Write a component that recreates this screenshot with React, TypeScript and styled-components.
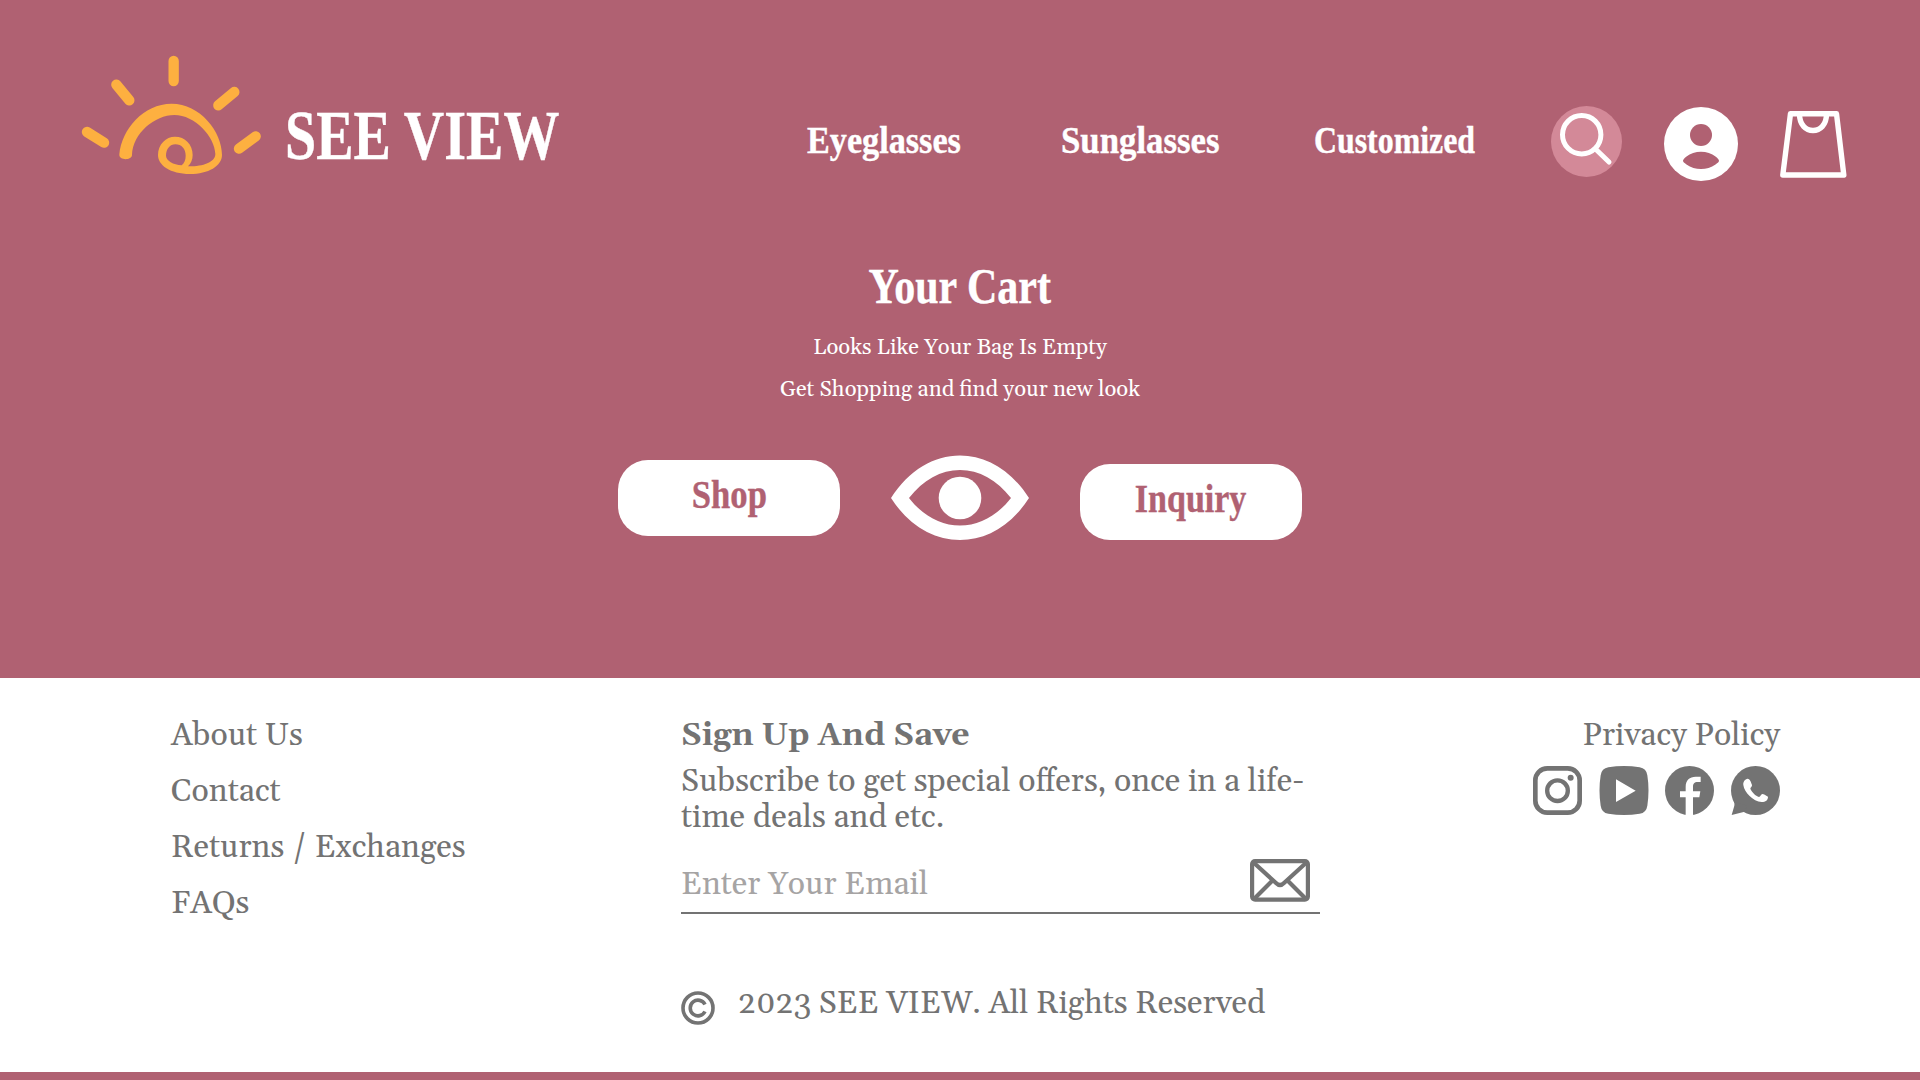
import React from "react";
import styled, { createGlobalStyle } from "styled-components";

const rose = "#b06172";
const grey = "#737373";

const GlobalStyle = createGlobalStyle`
  * {
    box-sizing: border-box;
  }
  body {
    margin: 0;
    background: ${rose};
    font-family: Gelasio, Georgia, "Liberation Serif", serif;
  }
  a {
    color: inherit;
    text-decoration: none;
  }
`;

type DisplayProps = {
  $size: number;
  $stretch: number;
};

const Page = styled.div`
  display: flex;
  flex-direction: column;
  width: 1920px;
  height: 1080px;
  overflow: hidden;
`;

const Header = styled.header`
  display: flex;
  align-items: flex-start;
  height: 240px;
  padding: 54px 72px 0 80px;
  color: #fff;
`;

// condensed bold serif used for the brand, the menu and the buttons
const Display = styled.span<DisplayProps>`
  display: inline-block;
  font-family: "Liberation Serif", serif;
  font-weight: bold;
  font-size: ${(p) => p.$size}px;
  line-height: 1;
  white-space: nowrap;
  transform: scaleX(${(p) => p.$stretch});
  -webkit-text-stroke: 0.4px currentColor;
`;

const Brand = styled.a`
  display: flex;
  width: 727px;
  gap: 23px;
`;

const BrandName = styled(Display)`
  margin-top: 47px;
  transform-origin: left;
`;

const Menu = styled.nav`
  display: grid;
  grid-template-columns: 254px 253px 237px;
  margin-top: 67px;
`;

const MenuLink = styled(Display)`
  transform-origin: left;
`;

const Tools = styled.div`
  display: flex;
  margin-top: 52px;
`;

const SearchButton = styled.button`
  display: flex;
  width: 71px;
  height: 71px;
  padding: 0;
  border: none;
  border-radius: 50%;
  background: #d38998;
`;

const ProfileLink = styled.a`
  margin: 1px 0 0 42px;
`;

const BagLink = styled.a`
  margin: 5px 0 0 42px;
`;

const Cart = styled.main`
  display: flex;
  flex-direction: column;
  align-items: center;
  height: 438px;
  padding-top: 21px;
  color: #fff;
`;

const CartText = styled.p`
  margin: 0;
  font-size: 22px;
  line-height: 42px;
`;

const Title = styled.h1`
  margin: 0 0 13px;
  line-height: 51px;
  font-size: 51px;
`;

const Actions = styled.div`
  display: flex;
  align-items: flex-start;
  justify-content: center;
  gap: 51px;
  margin-top: 44px;
`;

const ActionButton = styled.button<{ $drop: number }>`
  width: 222px;
  height: 76px;
  margin-top: ${(p) => p.$drop}px;
  padding: 0 0 7px;
  border: none;
  border-radius: 30px;
  background: #fff;
  color: ${rose};
`;

const Footer = styled.footer`
  display: flex;
  height: 394px;
  padding: 38px 140px 0 171px;
  background: #fff;
  color: ${grey};
  font-size: 32px;
`;

const Links = styled.div`
  display: flex;
  flex-direction: column;
  width: 510px;
  line-height: 40px;
  gap: 16px;
`;

const SignUp = styled.div`
  display: flex;
  flex-direction: column;
  width: 639px;
`;

const SignUpTitle = styled.h2`
  margin: 0;
  font-size: 32px;
  line-height: 40px;
`;

const SignUpText = styled.p`
  margin: 8px 0 0;
  line-height: 36px;
  white-space: nowrap;
`;

const EmailRow = styled.div`
  display: flex;
  justify-content: space-between;
  height: 56px;
  margin-top: 22px;
  padding: 0 10px 0 0;
  border-bottom: 2px solid ${grey};
`;

const EmailInput = styled.input`
  width: 420px;
  height: 52px;
  padding: 0;
  border: none;
  outline: none;
  background: transparent;
  font: inherit;
  &::placeholder {
    color: #a6a4a4;
    opacity: 1;
  }
`;

const MailButton = styled.button`
  display: flex;
  padding: 1px 0 0;
  border: none;
  background: none;
`;

const Copyright = styled.div`
  display: flex;
  gap: 23px;
  margin-top: 70px;
  line-height: 40px;
  white-space: nowrap;
`;

const CopyMark = styled.svg`
  margin-top: 7px;
`;

const Social = styled.div`
  display: flex;
  flex: 1;
  flex-direction: column;
  align-items: flex-end;
  line-height: 40px;
`;

const SocialIcons = styled.div`
  display: flex;
  gap: 16.6px;
  margin-top: 10px;
`;

const Sun = () => (
  <svg width="182" height="122" viewBox="60 42 546 366">
    <g stroke="#fdb040" strokeWidth="31" strokeLinecap="round">
      <path d="M341 63V123" />
      <path d="M169 134L208 181" />
      <path d="M523 156L475 196" />
      <path d="M81 276L132 308" />
      <path d="M587 289L537 326" />
    </g>
    <path
      fill="#fdb040"
      fillRule="evenodd"
      d="M178 343C185 268 250 191 335 191C420 191 486 275 486 345C486 378 445 402 390 402C330 402 294 375 294 345C294 313 318 290 345 290C375 290 398 313 398 345C398 359 393 370 384 379C425 380 466 368 466 342C464 290 405 225 343 225C285 225 218 280 216 345C216 362 176 362 178 343ZM318 347C318 327 330 313 346 313C365 313 377 327 377 347C377 360 373 369 365 376C340 374 318 362 318 347Z"
    />
  </svg>
);

const SearchIcon = () => (
  <svg width="71" height="71" viewBox="0 0 71 71" fill="none" stroke="#fff" strokeWidth="5">
    <circle cx="30.7" cy="28.7" r="19.2" />
    <path d="M45 43.5L58 56" strokeLinecap="round" />
  </svg>
);

const ProfileIcon = () => (
  <svg width="74" height="74" viewBox="0 0 74 74">
    <circle cx="37" cy="37" r="37" fill="#fff" />
    <circle cx="37" cy="28" r="11" fill={rose} />
    <path
      fill={rose}
      d="M19 54Q19 52 22.5 49.5C30 43 44 43 51.5 49.5Q55 52 55 54Q55 55 51.5 57.5C43 63.5 31 63.5 22.5 57.5Q19 55 19 54Z"
    />
  </svg>
);

const BagIcon = () => (
  <svg width="67" height="67" viewBox="0 0 67 67" fill="none" stroke="#fff" strokeWidth="5.4" strokeLinejoin="round">
    <path d="M10.5 2.7H56.5L63.8 64H2.8Z" />
    <path d="M19.5 3C19.5 14 26 19.5 33 19.5C40 19.5 46.5 14 46.5 3" />
  </svg>
);

const EyeIcon = () => (
  <svg width="138" height="86" viewBox="0 0 138 86">
    <path
      fill="#fff"
      fillRule="evenodd"
      d="M0 43C18 15 43 0.5 69 0.5C95 0.5 120 15 138 43C120 71 95 85 69 85C43 85 18 71 0 43ZM18 43C32 25 50 15 69 15C88 15 106 25 120 43C106 61 88 70.500 69 70.500C50 70.500 32 61 18 43Z"
    />
    <circle cx="69" cy="43" r="21.3" fill="#fff" />
  </svg>
);

const MailIcon = () => (
  <svg width="60" height="43" viewBox="0 0 60 43" fill="none" stroke={grey} strokeWidth="4.2" strokeLinejoin="round">
    <rect x="2.1" y="2.1" width="55.8" height="38.5" rx="3" />
    <path d="M3 3L26 24Q30 28 34 24L57 3" />
    <path d="M4 40L22.5 21.5M56 40L37.5 21.5" />
  </svg>
);

const InstagramIcon = () => (
  <svg width="49" height="49" viewBox="0 0 147 147" fill="none" stroke={grey} strokeWidth="14">
    <rect x="7" y="7" width="133" height="133" rx="36" />
    <circle cx="73.5" cy="74" r="31" strokeWidth="13" />
    <circle cx="113" cy="35" r="9" fill={grey} stroke="none" />
  </svg>
);

const YoutubeIcon = () => (
  <svg width="50" height="49" viewBox="0 0 150 147" fill={grey}>
    <path
      fillRule="evenodd"
      d="M28 4Q75 -4 122 4Q142 7 145 28Q152 73 145 119Q142 140 122 143Q75 151 28 143Q8 140 5 119Q-2 73 5 28Q8 7 28 4ZM51 40V108L110 74Z"
    />
  </svg>
);

const FacebookIcon = () => (
  <svg width="49" height="49" viewBox="0 0 147 147">
    <circle cx="73.5" cy="73.5" r="73.5" fill={grey} />
    <path fill="#fff" d="M62 148V94H45V76H62V62C62 42 74 32 92 32H107V48H98C88 48 84 54 84 62V76H106L103 94H84V148Z" />
  </svg>
);

const WhatsappIcon = () => (
  <svg width="49" height="49" viewBox="0 0 147 147">
    <circle cx="73.5" cy="73.5" r="73.5" fill={grey} />
    <path fill={grey} d="M8 106Q13 112 10 119L2 147L38 138L50 120Z" />
    <path
      fill="#fff"
      d="M50 38C42 40 36 46 37 57C40 80 66 106 92 108C104 108 111 102 111 92C104 88 98 84 94 84C90 84 88 93 84 93C74 90 62 78 58 68C58 64 64 62 63 57C60 48 57 39 50 38Z"
    />
  </svg>
);

const menu = [
  { label: "Eyeglasses", stretch: 0.9 },
  { label: "Sunglasses", stretch: 0.915 },
  { label: "Customized", stretch: 0.838 },
];

const links = ["About Us", "Contact", "Returns / Exchanges", "FAQs"];

const App = () => {
  return (
    <Page>
      <GlobalStyle />
      <Header>
        <Brand href="#">
          <Sun />
          <BrandName $size={70} $stretch={0.8}>SEE VIEW</BrandName>
        </Brand>
        <Menu>
          {menu.map((item) => (
            <MenuLink key={item.label} $size={38} $stretch={item.stretch}>
              {item.label}
            </MenuLink>
          ))}
        </Menu>
        <Tools>
          <SearchButton>
            <SearchIcon />
          </SearchButton>
          <ProfileLink href="#">
            <ProfileIcon />
          </ProfileLink>
          <BagLink href="#">
            <BagIcon />
          </BagLink>
        </Tools>
      </Header>

      <Cart>
        <Title>
          <Display $size={51} $stretch={0.823}>Your Cart</Display>
        </Title>
        <CartText>Looks Like Your Bag Is Empty</CartText>
        <CartText>Get Shopping and find your new look</CartText>
        <Actions>
          <ActionButton $drop={5}>
            <Display $size={40} $stretch={0.865}>Shop</Display>
          </ActionButton>
          <EyeIcon />
          <ActionButton $drop={9}>
            <Display $size={40} $stretch={0.85}>Inquiry</Display>
          </ActionButton>
        </Actions>
      </Cart>

      <Footer>
        <Links>
          {links.map((link) => (
            <a href="#" key={link}>{link}</a>
          ))}
        </Links>
        <SignUp>
          <SignUpTitle>Sign Up And Save</SignUpTitle>
          <SignUpText>
            Subscribe to get special offers, once in a life-
            <br />
            time deals and etc.
          </SignUpText>
          <EmailRow>
            <EmailInput placeholder="Enter Your Email" />
            <MailButton>
              <MailIcon />
            </MailButton>
          </EmailRow>
          <Copyright>
            <CopyMark width="34" height="34" viewBox="0 0 34 34" fill="none" stroke={grey} strokeWidth="3.6">
              <circle cx="17" cy="17" r="15" />
              <path d="M24 13.5A7.8 7.8 0 1 0 24 20.5" />
            </CopyMark>
            2023 SEE VIEW. All Rights Reserved
          </Copyright>
        </SignUp>
        <Social>
          <a href="#">Privacy Policy</a>
          <SocialIcons>
            <InstagramIcon />
            <YoutubeIcon />
            <FacebookIcon />
            <WhatsappIcon />
          </SocialIcons>
        </Social>
      </Footer>
    </Page>
  );
};

export default App;
